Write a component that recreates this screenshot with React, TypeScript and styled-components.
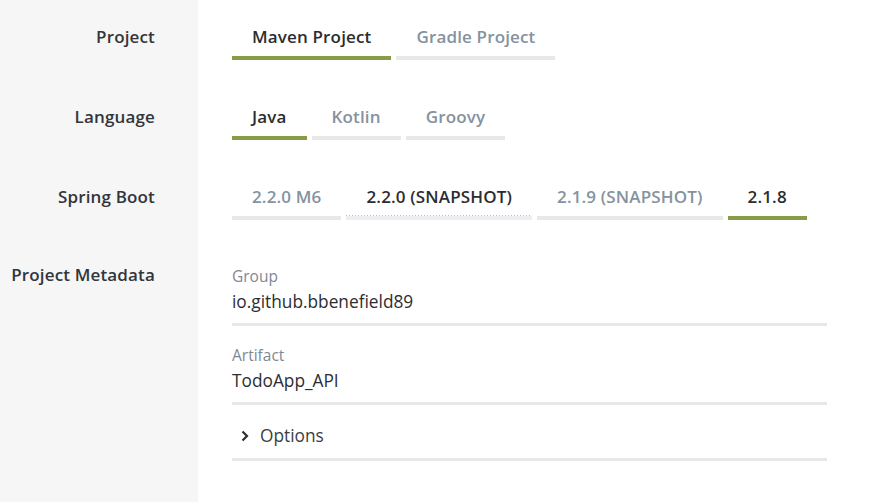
import { Fragment } from "react";
import styled, { createGlobalStyle } from "styled-components";

const GlobalStyle = createGlobalStyle`
  body {
    margin: 0;
    background: #fff;
    font-family: "Open Sans", "Liberation Sans", sans-serif;
    color: #333;
  }
`;

const Page = styled.div`
  display: grid;
  grid-template-columns: 198px 1fr;
  grid-auto-rows: 80px;
  min-height: 502px;
  background: linear-gradient(to right, #f6f6f6 198px, #fff 198px);
`;

const LabelCell = styled.div<{ $meta?: boolean }>`
  text-align: right;
  padding: ${(p) => (p.$meta ? "24px" : "25px")} 43px 0 0;
  font-size: 17px;
  letter-spacing: 0.15px;
  font-weight: 600;
  line-height: ${(p) => (p.$meta ? "22px" : "24px")};
  color: #33353a;
`;

const ControlCell = styled.div`
  padding: 25px 0 0 34px;
`;

const Tabs = styled.div`
  display: flex;
  gap: 5px;
`;

const Tab = styled.div<{ $active?: boolean; $hover?: boolean }>`
  padding: 0 20px 7px;
  font-size: 17px;
  letter-spacing: 0.15px;
  font-weight: 600;
  line-height: 24px;
  white-space: nowrap;
  color: ${(p) => (p.$active || p.$hover ? "#2c2d31" : "#8592a0")};
  border-bottom: 4px solid
    ${(p) => (p.$active ? "#879c47" : p.$hover ? "#eceef1" : "#e8e8e8")};
  background: ${(p) =>
    p.$hover
      ? "repeating-linear-gradient(90deg, #b5bfca 0 1px, transparent 1px 3px) left bottom / 100% 1px no-repeat"
      : "none"};
`;

const Meta = styled.div`
  grid-row: span 3;
  padding: 25px 0 40px 34px;
  width: 595px;
`;

const Field = styled.div`
  border-bottom: 3px solid #e8e8e8;
  padding-bottom: 10px;
  margin-bottom: 18px;
`;

const FieldLabel = styled.div`
  font-size: 15.5px;
  line-height: 22px;
  color: #7f8894;
`;

const FieldValue = styled.div`
  margin-top: 4px;
  font-size: 17.3px;
  line-height: 22px;
  color: #2c2d31;
`;

const Options = styled.div`
  display: flex;
  align-items: center;
  gap: 10px;
  padding: 1px 0 10px 8px;
  border-bottom: 3px solid #e8e8e8;
  font-size: 17.3px;
  line-height: 24px;
  color: #3b3e44;
`;

const rows = [
  { label: "Project", items: ["Maven Project", "Gradle Project"], active: 0 },
  { label: "Language", items: ["Java", "Kotlin", "Groovy"], active: 0 },
  {
    label: "Spring Boot",
    items: ["2.2.0 M6", "2.2.0 (SNAPSHOT)", "2.1.9 (SNAPSHOT)", "2.1.8"],
    active: 3,
    hover: 1,
  },
];

export default function App() {
  return (
    <>
      <GlobalStyle />
      <Page>
        {rows.map((r) => (
          <Fragment key={r.label}>
            <LabelCell>{r.label}</LabelCell>
            <ControlCell>
              <Tabs>
                {r.items.map((it, i) => (
                  <Tab key={it} $active={i === r.active} $hover={i === r.hover}>
                    {it}
                  </Tab>
                ))}
              </Tabs>
            </ControlCell>
          </Fragment>
        ))}
        <LabelCell $meta>Project Metadata</LabelCell>
        <Meta>
          <Field>
            <FieldLabel>Group</FieldLabel>
            <FieldValue>io.github.bbenefield89</FieldValue>
          </Field>
          <Field>
            <FieldLabel>Artifact</FieldLabel>
            <FieldValue>TodoApp_API</FieldValue>
          </Field>
          <Options>
            <svg width="10" height="12" viewBox="0 0 10 12">
              <path d="M2.5 1.5 L7 6 L2.5 10.5" fill="none" stroke="#2c2d31" strokeWidth="2.2" />
            </svg>
            Options
          </Options>
        </Meta>
      </Page>
    </>
  );
}
